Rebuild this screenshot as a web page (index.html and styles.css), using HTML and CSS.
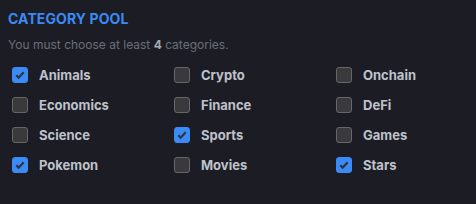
FILE: index.html
```html
<!DOCTYPE html>
<html lang="en">
<head>
    <meta charset="UTF-8">
    <meta name="viewport" content="width=device-width, initial-scale=1.0">
    <title>Category Pool</title>
    <link rel="stylesheet" href="styles.css">
</head>
<body>
    <div class="pool">
        <h2>CATEGORY POOL</h2>
        <p class="hint">You must choose at least <strong>4</strong> categories.</p>

        <div class="grid">
            <label class="item checked"><span class="box"><svg viewBox="0 0 16 16"><path d="M3.8 8.2l2.7 2.8L12.2 4.8"/></svg></span>Animals</label>
            <label class="item"><span class="box"></span>Crypto</label>
            <label class="item"><span class="box"></span>Onchain</label>

            <label class="item"><span class="box"></span>Economics</label>
            <label class="item"><span class="box"></span>Finance</label>
            <label class="item"><span class="box"></span>DeFi</label>

            <label class="item"><span class="box"></span>Science</label>
            <label class="item checked"><span class="box"><svg viewBox="0 0 16 16"><path d="M3.8 8.2l2.7 2.8L12.2 4.8"/></svg></span>Sports</label>
            <label class="item"><span class="box"></span>Games</label>

            <label class="item checked"><span class="box"><svg viewBox="0 0 16 16"><path d="M3.8 8.2l2.7 2.8L12.2 4.8"/></svg></span>Pokemon</label>
            <label class="item"><span class="box"></span>Movies</label>
            <label class="item checked"><span class="box"><svg viewBox="0 0 16 16"><path d="M3.8 8.2l2.7 2.8L12.2 4.8"/></svg></span>Stars</label>
        </div>
    </div>
</body>
</html>
```

FILE: styles.css
```css
body {
    margin: 0;
    background-color: #1c1d24;
    font-family: 'Inter', 'Noto Sans', sans-serif;
    color: #c3c6cf;
}
.pool {
    padding: 10px 8px;
}
h2 {
    margin: 0;
    font-size: 14px;
    line-height: 17px;
    font-weight: 700;
    color: #3b8af5; /* accent blue */
    letter-spacing: 0.1px;
}
.hint {
    margin: 10px 0 0;
    font-size: 12px;
    line-height: 16px;
    color: #6a6e78;
}
.hint strong {
    color: #a4a8b2;
}
.grid {
    display: grid;
    grid-template-columns: repeat(3, 162px);
    grid-auto-rows: 30px;
    margin-top: 7px;
    padding-left: 4px;
}
.item {
    display: flex;
    align-items: center;
    gap: 11px;
    font-size: 13px;
    font-weight: 700;
    color: #bfc2cb;
}
.box {
    box-sizing: border-box;
    width: 16px;
    height: 16px;
    border: 1px solid #66666a;
    border-radius: 3px;
    background-color: #3a3a3c;
}
.box svg {
    display: block;
    width: 14px;
    height: 14px;
    fill: none;
    stroke: #30343c;
    stroke-width: 2.5;
}
.checked .box {
    background-color: #3b8af5;
    border-color: #3b8af5;
}
```
